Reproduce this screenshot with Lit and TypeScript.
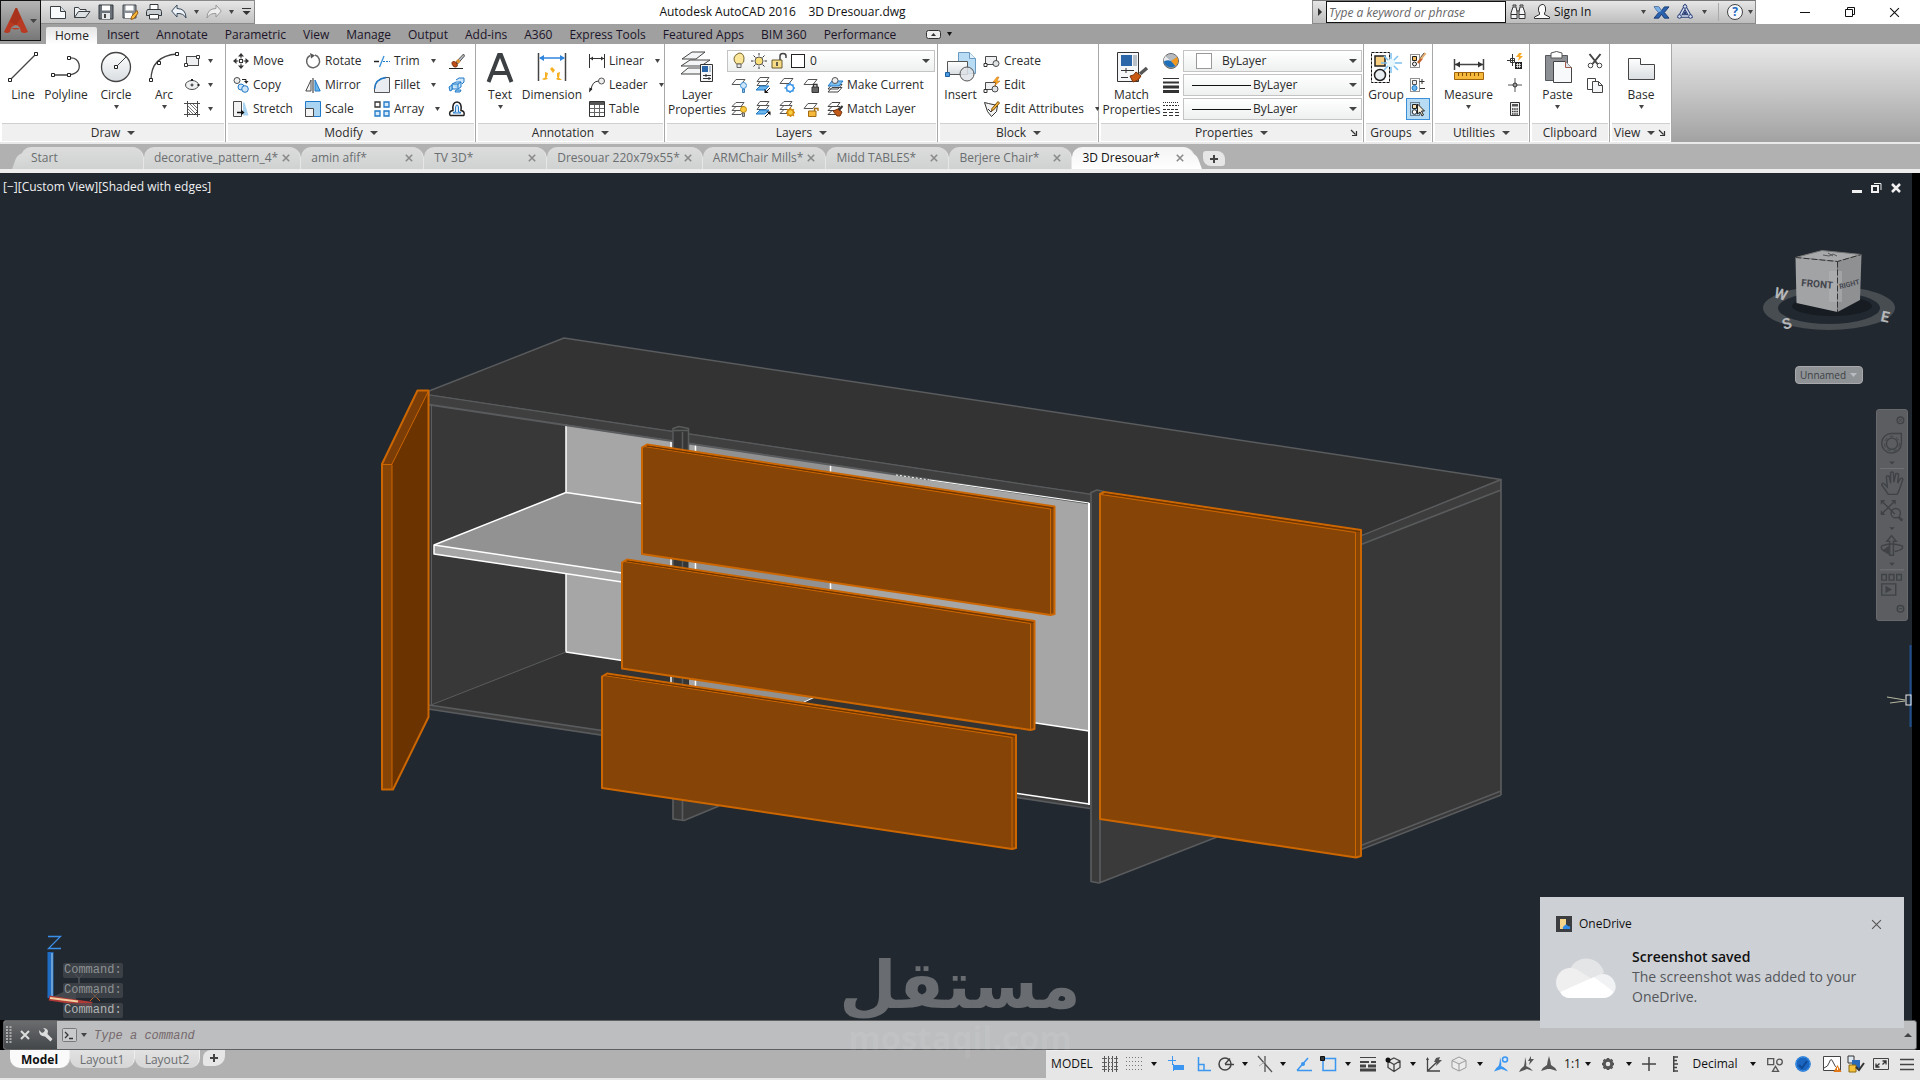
import { LitElement, html, svg, css, nothing, TemplateResult, SVGTemplateResult } from "lit";
import { customElement, property } from "lit/decorators.js";

type Drawing = SVGTemplateResult;

const INK = "#4a4a4a";
const BLUE = "#1f78c8";

/* Small icons, drawn on a 16 x 16 grid */
const small: Record<string, Drawing> = {
  rect: svg`<rect x="2.5" y="3.5" width="12" height="9" fill="#eef0f2" stroke="${INK}"/><path d="M.5 10.500h3v3h-3zM12.500 2.500h3v3h-3z" fill="#fff" stroke="#333"/>`,
  ellipse: svg`<ellipse cx="8" cy="8" rx="6.500" ry="4.500" fill="#eef0f2" stroke="${INK}"/><path d="M8 6.500v3M6.500 8h3" stroke="#222"/><path d="M7 2h2v2h-2zM13.500 7h2v2h-2z" fill="#222"/>`,
  hatch: svg`<path d="M3.500 0v16M13.500 0v16M0 2.500h16M0 13.500h16" stroke="${INK}"/><path d="M4 5l8 8M4 8l5 5M4 11l2 2M6 3l7 7M9 3l4 4" stroke="#777"/><path d="M10 14l4-4" stroke="#222"/>`,
  move: svg`<path d="M8 0l3 3.500H5zM8 16l3-3.500H5zM0 8l3.500-3v6zM16 8l-3.500-3v6z" fill="#333"/><path d="M8 3v2.500M8 10.500v2.500M3 8h2.500M10.500 8H13" stroke="#333"/><rect x="6.500" y="6.500" width="3" height="3" fill="#fff" stroke="#333"/>`,
  copy: svg`<circle cx="4" cy="3.500" r="3" fill="#eceef0" stroke="${INK}"/><path d="M9 2.500h4v2" fill="none" stroke="#222"/><path d="M11 4h4.500L13.300 6.800z" fill="#222"/><circle cx="8" cy="10" r="3" fill="#cfe6f8" stroke="${BLUE}"/><circle cx="12" cy="12" r="3.300" fill="#cfe6f8" stroke="${BLUE}"/>`,
  stretch: svg`<path d="M10 1.500h1.500l4 13H10z" fill="#a9d4f2"/><path d="M.5.500h8v15h-8z" fill="#f2f2f2" stroke="${INK}"/><path d="M4 11.500h5" stroke="#111" stroke-width="1.500"/><path d="M8 8.500l3.500 3L8 14.500z" fill="#111"/>`,
  rotate: svg`<path d="M10 2A6.500 6.500 0 1 1 5 2.500" fill="none" stroke="#666" stroke-width="1.500"/><path d="M5 0l5 2.500L6 5.500z" fill="#555"/>`,
  mirror: svg`<path d="M6 3v11H.8z" fill="#f4f4f4" stroke="${INK}"/><path d="M8 1v15" stroke="#222"/><path d="M10 3v11h5.200z" fill="#6bb6ea" stroke="${BLUE}"/>`,
  scale: svg`<path d="M.5.500h15v15h-15z" fill="#a9d4f2" stroke="${BLUE}"/><path d="M.5 7.500h8v8h-8z" fill="#f4f4f4" stroke="${INK}"/>`,
  trim: svg`<path d="M0 8.500h5" stroke="#222" stroke-width="1.500"/><path d="M10 3L5.500 14" stroke="#3a8fd8" stroke-width="1.300"/><path d="M9 8.500h7" stroke="${BLUE}" stroke-dasharray="2 1"/>`,
  fillet: svg`<path d="M.5 15.500V12Q1 2 12 .5h3.500v15z" fill="#e9edf1" stroke="#555"/><path d="M.5 12Q1 2 12 .5" fill="none" stroke="${BLUE}" stroke-width="1.500"/>`,
  array: svg`<path d="M1 1h5v5H1z" fill="#fff" stroke="#333" stroke-width="1.300"/><path d="M10 1h5v5h-5zM1 10h5v5H1zM10 10h5v5h-5z" fill="#d9ebfa" stroke="${BLUE}" stroke-width="1.300"/>`,
  erase: svg`<path d="M14.500 1L7 9l1.500 2L15.500 3z" fill="#b8bcc0" stroke="#555"/><path d="M8 7l2.500 2.500" stroke="#e0912c" stroke-width="3"/><path d="M3 10c0-2 3-2 4.500 0s1 4-1 4-3.500-2-3.500-4z" fill="#c05018" stroke="#7a2e08"/><path d="M0 15.500h14" stroke="#222"/>`,
  explode: svg`<path d="M3 7l4-2h5v5l-3 2H3zM7 3l3-2h5v4l-2 2" fill="#cfe6f8" stroke="${BLUE}"/><path d="M0 10l3-2v5l-2 1zM7 13h5l-1 2H6zM3 7h6v5M9 7l3-2" fill="#a9d4f2" stroke="${BLUE}"/>`,
  offset: svg`<path d="M1 14.500h14M1 14.500Q-.5 10 4 9.500 3 1 8 1t4 8.500Q16 10 15 14.500" fill="none" stroke="#222" stroke-width="1.500"/><path d="M4 12h8Q12 11 9.500 11 10 4 8 4T6.500 11Q4 11 4 12z" fill="#d5eafb" stroke="${BLUE}"/>`,
  linear: svg`<path d="M.5 1v14M15.500 1v14M1 5.500h14" stroke="#333"/><path d="M1 5.500l3-2v4zM15 5.500l-3-2v4z" fill="#333"/>`,
  leader: svg`<path d="M2 13Q3 4 10 4" fill="none" stroke="#333"/><path d="M0 15.500l.5-5 3 1.500z" fill="#222"/><circle cx="12.500" cy="4" r="3" fill="#eee" stroke="#555"/>`,
  table: svg`<path d="M.5.500h15v15H.5z" fill="#fff" stroke="#333"/><path d="M1 1h14v3H1z" fill="#555"/><path d="M1 7.500h14M1 11.500h14M5.500 4v11M10.500 4v11" stroke="#666"/>`,
  bulb: svg`<path d="M5.500 11Q2.500 8 3 5t5-5q4.500 0 5 5t-2.500 6z" fill="#fbe69a" stroke="#7a6a30"/><path d="M6 11h4v3.500H6z" fill="#e8e8e8" stroke="#666"/>`,
  sun: svg`<circle cx="8" cy="8" r="4" fill="#fbe07a" stroke="#555"/><path d="M8 0v2.500M8 13.500V16M0 8h2.500M13.500 8H16M2.500 2.500l2 2M11.500 11.500l2 2M13.500 2.500l-2 2M4.500 11.500l-2 2" stroke="#333"/>`,
  lock: svg`<path d="M1 7h10v8H1z" fill="#f6dc86" stroke="#6a5a28"/><path d="M6 9v4" stroke="#333" stroke-width="1.500"/><path d="M9 7V3q0-2.500 3-2.500T15 3v2" fill="none" stroke="#444" stroke-width="1.500"/>`,
  layOff: svg`<path d="M5 2.500h9l-4 5H1z" fill="#fff" stroke="#555"/><circle cx="12.500" cy="8.500" r="3" fill="#cfe6f8" stroke="#3a8fd8"/><path d="M11.500 12h2v3.500h-2z" fill="#8cbce4" stroke="#3a7fb8"/>`,
  layIso: svg`<path d="M5 .5h9l-3 4H2zM5 4.500h9l-3 4H2z" fill="#fff" stroke="#555"/><path d="M5 9h9l-4 4H1z" fill="#6bb6ea" stroke="${BLUE}"/><path d="M15 11l-4 4" stroke="#111"/><path d="M9.500 16v-4l4 4z" fill="#111"/>`,
  layFrz: svg`<path d="M5 1.500h9l-4 5H1z" fill="#fff" stroke="#555"/><circle cx="11" cy="11" r="3.500" fill="#fff" stroke="#3a96e8" stroke-width="1.500"/><path d="M11 5.500v2M11 14.500V16M5.500 11h2M14.500 11H16M7.500 7.500l1.500 1.500M14.500 7.500L13 9M7.500 14.500L9 13M14.500 14.500L13 13" stroke="#3a96e8" stroke-width="1.500"/>`,
  layLck: svg`<path d="M5 2.500h9l-4 5H1z" fill="#fff" stroke="#555"/><path d="M9 10h6.500v5.500H9z" fill="#666" stroke="#333"/><path d="M10.500 10V7.500h3.500V10" fill="none" stroke="#333" stroke-width="1.300"/>`,
  layCur: svg`<path d="M5 10.500h10l-4 4.500H1zM5 7.500h10l-4 4.500H1z" fill="#fff" stroke="#444"/><path d="M5 4h11l-4 5H1z" fill="#7cc0f0" stroke="${BLUE}"/><circle cx="8" cy="3.500" r="3" fill="#eee" stroke="#555"/>`,
  layOn: svg`<path d="M5 9.500h8l-3 4H1zM5 5.500h8l-3 4H1zM5 1.500h8l-3 4H1z" fill="#fff" stroke="#555"/><circle cx="12.500" cy="8.500" r="3" fill="#fbc93c" stroke="#c08a10"/><path d="M11.500 12h2v3.500h-2z" fill="#bbb" stroke="#666"/>`,
  layUniso: svg`<path d="M5 .5h9l-3 4H2zM5 4.500h9l-3 4H2z" fill="#fff" stroke="#555"/><path d="M5 9h9l-4 4H1z" fill="#6bb6ea" stroke="${BLUE}"/><path d="M10 16l4-4" stroke="#111"/><path d="M15.500 10.500v4l-4-4z" fill="#111"/>`,
  layThaw: svg`<path d="M5 8.500h8l-3 4H1zM5 4.500h8l-3 4H1zM5 .5h8l-3 4H1z" fill="#fff" stroke="#555"/><circle cx="11.500" cy="11.500" r="3" fill="#fbd040" stroke="#d08a10" stroke-width="1.500"/><path d="M11.500 6.500v1.500M11.500 15v1M7 11.500h1M15 11.500h1M8.200 8.200l1 1M14 14l1 1M14.800 8.200l-1 1M8.200 14.800l1-1" stroke="#d08a10" stroke-width="1.500"/>`,
  layUnl: svg`<path d="M5 2.500h9l-4 5H1z" fill="#fff" stroke="#555"/><path d="M5.500 10H13v5.500H5.500z" fill="#f6b93c" stroke="#a06a10"/><path d="M11.500 10V7.500H15V10" fill="none" stroke="#a06a10" stroke-width="1.300"/>`,
  layMat: svg`<path d="M5 9.500h8l-3 4H1zM5 5.500h8l-3 4H1zM5 1.500h8l-3 4H1z" fill="#fff" stroke="#444"/><path d="M6 10l4 5h3l2-4-4-3z" fill="#c05a18" stroke="#7a3208"/><path d="M12 9l3.500-4" stroke="#333" stroke-width="2"/>`,
  create: svg`<path d="M1.500 3.500h11v8h-11z" fill="#eef0f2" stroke="${INK}"/><circle cx="12" cy="10.500" r="3" fill="#dfe3e6" stroke="${INK}"/><path d="M0 10.500h3v3H0z" fill="#fff" stroke="#333"/>`,
  edit: svg`<path d="M1.500 5.500h10v7h-10z" fill="#eef0f2" stroke="${INK}"/><circle cx="11" cy="12" r="3" fill="#dfe3e6" stroke="${INK}"/><path d="M0 12.500h3v3H0z" fill="#fff" stroke="#333"/><path d="M13 0L9 5h3l-1.500 4L16 4h-3l2-4z" fill="#f9a825" stroke="#c06a10" stroke-width=".5"/>`,
  attr: svg`<path d="M.5 1.500l4 1 9 2-1 6-5 5-4-5z" fill="#f2f2f2" stroke="#333"/><path d="M4 8l3 3 3-4" fill="none" stroke="#333"/><path d="M14 .5l-6 7-.5 2 2-.5 6-7z" fill="#f6b93c" stroke="#7a4a08"/>`,
  wheel: svg`<circle cx="8" cy="8" r="7.500" fill="#9aa0a6" stroke="#666"/><path d="M8 8L3 3a7.500 7.500 0 0 1 11 1z" fill="#b4bac0"/><path d="M8 8L2.500 3A7.500 7.500 0 0 0 .8 9.500z" fill="#e8eaec"/><path d="M8 8l6-4a7.500 7.500 0 0 1-1.500 9z" fill="#f39a1e"/><path d="M.8 8.500q4-2 7-.5l4.500 5A7.500 7.500 0 0 1 .8 8.500z" fill="#1e6fb8"/>`,
  weight: svg`<path d="M0 1.500h16" stroke="#333"/><path d="M0 5.500h16" stroke="#333" stroke-width="2"/><path d="M0 10h16M0 14.500h16" stroke="#333" stroke-width="3"/>`,
  ltype: svg`<path d="M0 1.500h16" stroke="#333" stroke-dasharray="1 1"/><path d="M0 4.500h16" stroke="#333" stroke-dasharray="2 1"/><path d="M0 8.500h16" stroke="#333" stroke-dasharray="3 1"/><path d="M0 11.500h16M0 14.500h16" stroke="#333" stroke-dasharray="4 2"/>`,
  ungroup: svg`<path d="M.5 1.500h9v13h-9z" fill="none" stroke="#222" stroke-dasharray="1 1"/><path d="M2.500 3.500h4v4h-4z" fill="#f6c060" stroke="#222"/><circle cx="4.500" cy="11" r="2" fill="#eee" stroke="#222"/><path d="M12 5L8 10" stroke="#c0602a" stroke-width="2.500"/><path d="M15.500 0L11 5.500" stroke="#e8b070" stroke-width="2.500"/><path d="M14 0l-3.500 4.500" stroke="#555"/>`,
  gedit: svg`<path d="M.5 1.500h9v13h-9z" fill="none" stroke="#222" stroke-dasharray="1 1"/><path d="M2.500 3.500h4v4h-4z" fill="#eee" stroke="#555"/><circle cx="4.500" cy="11" r="2.500" fill="#6bb6ea" stroke="${BLUE}"/><path d="M9.500 4.500h5M12 2v5M10 11.500h5" stroke="#333"/>`,
  gsel: svg`<path d="M.5 1.500h9v13h-9z" fill="none" stroke="#222" stroke-dasharray="1 1"/><path d="M2.500 3.500h4v4h-4z" fill="#f6e0b0" stroke="#222"/><circle cx="4.500" cy="11" r="2.300" fill="#fff" stroke="#222"/><path d="M7.500 3v10l2.500-2 2 4 1.500-1-2-4h3z" fill="#f8f0d8" stroke="#222"/>`,
  qcalc: svg`<path d="M5.500 1v12M0 7.500h8M3.500 5.500h4v4h-4z" fill="none" stroke="#333"/><path d="M8 9h7v7H8z" fill="#222"/><path d="M9 11.500h5M9 13.500h5M10.500 10v5M12.500 10v5" stroke="#fff" stroke-width=".700"/><path d="M12 0L9 4h3l-1 4 5-5h-3l2-3z" fill="#f9a825"/>`,
  point: svg`<path d="M8 1v14M1 8h14" stroke="#555"/><circle cx="8" cy="8" r="2" fill="#999" stroke="#333"/>`,
  calc: svg`<path d="M3.500 1.500h9v13h-9z" fill="#f2f2f2" stroke="#333"/><path d="M5 3h6v2.500H5z" fill="#555"/><path d="M5 8h6M5 10.500h6M5 13h6" stroke="#333" stroke-width="1.300" stroke-dasharray="1.500 .700"/>`,
  cut: svg`<path d="M2.500 1l8 10M13.500 1l-8 10" stroke="#444" stroke-width="2"/><circle cx="3.500" cy="12.500" r="2.300" fill="#fff" stroke="#444"/><circle cx="12.500" cy="12.500" r="2.300" fill="#fff" stroke="#444"/>`,
  clone: svg`<path d="M.5 1.500h8v11h-8z" fill="#fff" stroke="#444"/><path d="M5.500 4.500h6l4 4v7h-10z" fill="#f4f6f8" stroke="#444"/><path d="M11.500 4.500v4h4" fill="none" stroke="#444"/>`,

  new: svg`<path d="M.5 2.500h10l5 5v7h-15z" fill="#f8fafb" stroke="#3a3f44"/><path d="M10.500 2.500v5h5" fill="#dde3e8" stroke="#3a3f44"/>`,
  open: svg`<path d="M.5 13.500v-10h4l1.500 2h6v2" fill="#f0f2f4" stroke="#3a3f44"/><path d="M.5 13.500l4-6H16l-4.500 6z" fill="#dde0e3" stroke="#3a3f44"/>`,
  save: svg`<path d="M1 1h14v14H1z" fill="#6a7178" stroke="#33383d"/><path d="M4 1.500h8v5H4z" fill="#fff"/><path d="M4 9h8v6H4z" fill="#e3e7ea"/><path d="M6 10h2v4H6z" fill="#444"/>`,
  saveas: svg`<path d="M1 1h13v13H1z" fill="#8a9096" stroke="#44494e"/><path d="M3.500 1.500h8v5h-8zM3 9h7v5H3z" fill="#fff"/><path d="M15 6.500l-5.500 6-.5 3 3-1L16 9z" fill="#f6b93c" stroke="#9a5a10"/>`,
  print: svg`<path d="M4 .5h8v5H4z" fill="#fff" stroke="#33383d"/><path d="M1.500 5.500h13l1 2v4H.5v-4z" fill="#c8cdd2" stroke="#33383d"/><path d="M3.500 10.500h9v4.500h-9z" fill="#fff" stroke="#33383d"/>`,
  undo: svg`<path d="M6 1v3.500q9 0 9 9.500-2.500-5-9-4.500V13L.7 7z" fill="#eef3f7" stroke="#3a4a5a"/>`,
  redo: svg`<path d="M10 1v3.500q-9 0-9 9.500 2.500-5 9-4.500V13l5.300-6z" fill="#eee" stroke="#999"/>`,
  binoc: svg`<path d="M1 14.500V9l2-6h3l1 5v6.500zM15 14.500V9l-2-6h-3L9 8v6.500z" fill="#f2f4f6" stroke="#333"/><path d="M3 2.500V1h3v1.500M10 2.500V1h3v1.500M7 7h2M1 10.500h6M9 10.500h6" fill="none" stroke="#333"/>`,
  user: svg`<path d="M5.500 9Q4 7 4.500 4T8 .5t3.500 3.500-1 5v1.500l5 2.500v1.500H.5V13l5-2.500z" fill="#fbfbfb" stroke="#333"/>`,
  exch: svg`<path d="M0 2h5l3 4 3-4h5l-5 6 5 6h-5l-3-4-3 4H0l5-6z" fill="#2a62b0" stroke="#173a70"/><path d="M0 2h5l3 4-3 2z" fill="#7ab0e8"/>`,
  a360: svg`<path d="M8 3L13 12H3z" fill="none" stroke="#2a3f78" stroke-width="3.500"/><path d="M8 3L13 12H3z" fill="none" stroke="#d8e0f0" stroke-width="1.500"/><path d="M8 6.500l2 4H6z" fill="#2a3f78"/><circle cx="8" cy="2.500" r="1.800" fill="#d8e0f0" stroke="#2a3f78"/><circle cx="2.500" cy="12.500" r="1.800" fill="#d8e0f0" stroke="#2a3f78"/><circle cx="13.500" cy="12.500" r="1.800" fill="#d8e0f0" stroke="#2a3f78"/>`,

  grid: svg`<path d="M2.500 0v16M6.500 0v16M10.500 0v16M14.500 0v16" stroke="#555"/><path d="M0 2.500h16M0 6.500h16M0 10.500h16M0 13.500h16" stroke="#666" stroke-dasharray="2 1"/>`,
  snap: svg`<path d="M0 1.500h16M0 5.500h16M0 9.500h16M0 13.500h16" stroke="#777" stroke-dasharray="1 2"/>`,
  dyn: svg`<path d="M0 4.500h8M4.500 0v9" stroke="#3a96f0"/><path d="M6 9h10v5H6z" fill="#3a96f0"/><path d="M5.500 8v7" stroke="#3a96f0"/>`,
  ortho: svg`<path d="M3.500 1v13.500H16M3.500 8.500H9v6" fill="none" stroke="#3a96f0" stroke-width="1.500"/>`,
  polar: svg`<circle cx="7" cy="8" r="6" fill="none" stroke="#444" stroke-width="1.500"/><path d="M7 8.500h9M7 8l5-5.500" stroke="#444" stroke-width="1.300"/>`,
  iso: svg`<path d="M1 0l14 16M8 0v16" stroke="#555" stroke-width="1.300"/><path d="M2 10l7-5" stroke="#aaa"/>`,
  otrack: svg`<path d="M1 14.500h15M1 14.500L12 2" stroke="#3a96f0" stroke-width="1.500"/><circle cx="7" cy="8" r="2" fill="#3a96f0"/>`,
  osnap: svg`<path d="M3 2.500h12.500v12H3z" fill="none" stroke="#3a96f0" stroke-width="1.500"/><path d="M.5.500h4v4h-4z" fill="#333" stroke="#111"/>`,
  lweight: svg`<path d="M0 1.500h16" stroke="#444"/><path d="M0 6h9M11 6h5" stroke="#444" stroke-width="2"/><path d="M0 10h6M8 10h8M0 14h16" stroke="#444" stroke-width="3"/>`,
  osnap3: svg`<path d="M9 2l6 3v6.500l-6 4-6-4V5zM3 5l6 3.500L15 5M9 8.500v7" fill="none" stroke="#444" stroke-width="1.300"/><circle cx="3" cy="4" r="2.500" fill="#111"/>`,
  ducs: svg`<path d="M1.500 3v12H14M1.500 15L11 6" fill="none" stroke="#444" stroke-width="1.300"/><path d="M10 2L8 6h3l-1 4 6-6h-3l1-3z" fill="#555"/><path d="M0 4l1.500-3L3 4z" fill="#444"/>`,
  gizmo: svg`<path d="M8 1l7 3.500v7L8 15l-7-3.500v-7zM1 4.500L8 8l7-3.500M8 8v7" fill="#ececec" stroke="#999"/>`,
  annA: svg`<path d="M7 1q2 7 1 9 5 2 7 5.500L8.500 13 1 15.500q2-4 4.500-5.500 1.500-3 1.500-9z" fill="#3a96f0"/><circle cx="12" cy="3.500" r="2.500" fill="#d4e8fa" stroke="#3a96f0" stroke-width="1.500"/>`,
  annB: svg`<path d="M7 1q2 7 1 9 5 2 7 5l-6-2-8 3q2-4 5-6 1-3 1-9z" fill="#555"/><path d="M13 0l-3 5h2l-1 4 5-6h-3z" fill="#555"/>`,
  annC: svg`<path d="M8 0q1.500 5 2 9 4 2 6 6l-6.500-2h-3L0 15q2-4 6-6 .500-4 2-9z" fill="#555"/>`,
  gear: svg`<circle cx="8" cy="8" r="3.800" fill="none" stroke="#555" stroke-width="3"/><path d="M8 2v2M8 12v2M2 8h2M12 8h2M3.700 3.700l2 2M10.300 10.300l2 2M12.300 3.700l-2 2M5.700 10.300l-2 2" stroke="#555" stroke-width="2.500"/>`,
  plus: svg`<path d="M8 1v14M1 8h14" stroke="#444" stroke-width="1.500"/>`,
  ruler: svg`<path d="M6 0h1.500v16H6z" fill="#444"/><path d="M7 1h4M7 4.500h3M7 8h4M7 11.500h3M7 15h4" stroke="#444" stroke-width="1.500"/>`,
  shapes: svg`<path d="M.7 2.700h6v6h-6z" fill="none" stroke="#555" stroke-width="1.300"/><circle cx="12.500" cy="6" r="2.800" fill="none" stroke="#555" stroke-width="1.300"/><path d="M5.500 15.300l3-5 3 5z" fill="none" stroke="#555" stroke-width="1.300"/>`,
  hw: svg`<circle cx="8" cy="8" r="7.700" fill="#1a66c0"/><circle cx="8" cy="8" r="7" fill="none" stroke="#3a96f0"/><path d="M4 9l3 3 5-7" fill="none" stroke="#0e4a98" stroke-width="2"/>`,
  perf: svg`<path d="M-.5.500h17v14h-17z" fill="#fff" stroke="#444"/><path d="M0 12Q4 11 5.500 6T9 6t5 7" fill="none" stroke="#444"/><path d="M9.500 16l4-7 4 7z" fill="#e07818"/><path d="M13.500 11.500v2.500" stroke="#fff"/>`,
  trust: svg`<path d="M0 0h6v7H0z" fill="#dfe9f3" stroke="#333"/><path d="M4 4h8v8H4z" fill="#2a6ab8"/><path d="M1 9h7v7H1z" fill="#f6c23c" stroke="#8a6a10"/><path d="M8 11l3 3 5-7" fill="none" stroke="#333" stroke-width="2"/>`,
  full: svg`<path d="M.5 2.500h15v11H.5z" fill="none" stroke="#444"/><path d="M9.500 5H13v3.500M13 5L9.500 8.500M6.500 11H3V7.500M3 11l3.500-3.500" fill="none" stroke="#333" stroke-width="1.300"/>`,
  menu: svg`<path d="M1 3.500h14M1 8.500h14M1 13.500h14" stroke="#444" stroke-width="1.500"/>`,
};

/* Large ribbon icons, drawn on a 32 x 32 grid */
const large: Record<string, Drawing> = {
  line: svg`<path d="M3 29L29 3" stroke="#444" stroke-width="1.300"/><path d="M1.500 27.500h3v3h-3zM27.500 1.500h3v3h-3z" fill="#fff" stroke="#222"/>`,
  polyline: svg`<path d="M3 24H19Q31 22 29 13 27 6 19 7" fill="none" stroke="#444" stroke-width="1.300"/><path d="M1.500 22.500h3v3h-3zM17.500 22.500h3v3h-3zM17.500 5.500h3v3h-3z" fill="#fff" stroke="#222"/>`,
  circle: svg`<circle cx="16" cy="16" r="14.500" fill="url(#shade)" stroke="#444" stroke-width="1.300"/><path d="M16 16L26 6" stroke="#444"/><path d="M14.500 14.500h3v3h-3z" fill="#fff" stroke="#222"/>`,
  arc: svg`<path d="M3 29Q3 5 29 3" fill="none" stroke="#444" stroke-width="1.300"/><path d="M1.500 27.500h3v3h-3zM9.500 10.500h3v3h-3zM27.500 1.500h3v3h-3z" fill="#fff" stroke="#222"/>`,
  text: svg`<path d="M4.500 31L15 4h2l10.500 27M9 22h14" fill="none" stroke="#3d4043" stroke-width="4"/>`,
  dim: svg`<path d="M2.500 2v28M29.500 2v28" stroke="#444" stroke-width="1.500"/><path d="M4 7h24" stroke="#2f86dc" stroke-width="1.500"/><path d="M3 7l5-3v6zM29 7l-5-3v6z" fill="#2f86dc"/><path d="M14 18l2-2 3 3-2 3zM9 21l3 1-1 4-2 2zM21 22l3-1-1 6-2-1zM6 28l4-2 2 2-4 1zM20 28l2-2 4 3-4 0z" fill="#f6b021"/>`,
  layers: svg`<path d="M7 17h20l-7 6H0zM9 9h20l-9 6H0zM11 1h13l-9 7H1z" fill="#f4f5f6" stroke="#444"/><path d="M19.500 13.500h12v17h-12z" fill="#f5f6f8" stroke="#333"/><path d="M21 15h6v6h-6z" fill="#2a66a8"/><path d="M28 15h2v6h-2z" fill="#b8c4d0"/><path d="M22 24.500h8M22 27.500h8M25 23v3M28 26v3" stroke="#333"/>`,
  insert: svg`<path d="M13.500 1.500h11l6 6v15h-17z" fill="#b8dcf4" stroke="#6a9ac0"/><path d="M24.500 1.500v6h6" fill="#e2f1fb" stroke="#6a9ac0"/><path d="M2.500 10.500h20v13h-20z" fill="url(#shade)" stroke="#555"/><circle cx="22" cy="23" r="7" fill="#dfe3e7" fill-opacity=".85" stroke="#555"/><path d="M.5 21.500h4v4h-4z" fill="#4a9ae0" stroke="#1f5f9f"/>`,
  match: svg`<path d="M1.500 1.500h21v29h-21z" fill="#f4f6f8" stroke="#333"/><path d="M5 4h11v11H5z" fill="#2a66a8"/><path d="M17 4h4v11h-4z" fill="#b8c0c8"/><path d="M5 19.500h13M10 17v5M5 26.500h7" stroke="#333"/><path d="M14 25q4 0 6-4l5 4q-2 5-8 6z" fill="#c85a14" stroke="#7a3208"/><path d="M24 23l7-6" stroke="#555" stroke-width="3.500"/>`,
  group: svg`<path d="M1.500 1.500h18v30h-18z" fill="none" stroke="#111" stroke-dasharray="3 1"/><path d="M5 5h10v10H5z" fill="#f8cf80" stroke="#222" stroke-width="1.500"/><circle cx="10" cy="24" r="5.500" fill="#e8edf2" stroke="#222" stroke-width="1.500"/><path d="M21 2v20M11 12h21M14 5l14 14M28 5L14 19" stroke="#7ec0f0" stroke-width="1.500"/><circle cx="21" cy="12" r="4" fill="#e8f6ff"/>`,
  measure: svg`<path d="M1.500 8v11M30.500 8v11M2 13.500h28" stroke="#444" stroke-width="1.500"/><path d="M2 13.500l5-3v6zM30 13.500l-5-3v6z" fill="#333"/><path d="M1.500 21.500h29v7h-29z" fill="#f6b93c" stroke="#a0640a"/><path d="M5.500 22v3M9.500 22v3M13.500 22v3M17.500 22v3M21.500 22v3M25.500 22v3" stroke="#7a4a08"/>`,
  paste: svg`<path d="M3.500 4.500h22v25h-22z" fill="#8c9094" stroke="#55595d"/><path d="M9 2q5.500-3 11 0v5H9z" fill="#fff" stroke="#555"/><path d="M11.500 10.500h12l6 6v15h-18z" fill="#f7f9fb" stroke="#444"/><path d="M23.500 10.500v6h6" fill="#dfe5ea" stroke="#a05a4a"/>`,
  base: svg`<path d="M3.500 7.500h12v6h14v15h-26z" fill="url(#shade)" stroke="#444"/>`,
};

const icon = (name: string, size = 16) => html`<svg
  class="icon" width=${size} height=${size} viewBox="0 0 16 16" aria-hidden="true">${small[name]}</svg>`;

const bigIcon = (name: string) => html`<svg class="icon" width="32" height="32" viewBox="0 0 32 32" aria-hidden="true">
  <defs><linearGradient id="shade" x1="0" y1="0" x2="0" y2="1">
    <stop offset="0" stop-color="#fff"/><stop offset="1" stop-color="#d9dde1"/>
  </linearGradient></defs>${large[name]}</svg>`;

const caret = (w = 7) => html`<svg class="caret" width=${w} height="4" viewBox="0 0 8 4"
  preserveAspectRatio="none" aria-hidden="true"><path d="M0 0h8L4 4z" fill="currentColor"/></svg>`;

const cross = (size: number, weight: number) => html`<svg class="icon" width=${size} height=${size} viewBox="0 0 10 10"
  aria-hidden="true"><path d="M1 1l8 8M9 1L1 9" stroke="currentColor" stroke-width=${weight}/></svg>`;

const shared = css`
  :host { font-family: "Open Sans", "Noto Sans", sans-serif; font-size: 12px; color: #2b2b2b; }
  * { box-sizing: border-box; }
  button, input, select {
    font: inherit; color: inherit; background: none; border: 0; padding: 0; margin: 0; line-height: 16px;
  }
  button { white-space: nowrap; cursor: default; }
  .icon { flex: none; display: block; overflow: visible; }
  .caret { flex: none; display: block; color: #444; }
`;

@customElement("title-bar")
class TitleBar extends LitElement {
  static styles = [shared, css`
    :host { display: flex; height: 24px; background: #fff; align-items: stretch; }
    .quick {
      display: grid; grid-template-columns: repeat(5, 24px) 25px 10px 25px 10px 21px; place-items: center;
      margin-left: 41px; padding-left: 5px; width: 214px;
      background: linear-gradient(#e6e6e6, #c2c2c2); border: 1px solid #8a8a8a; border-left: 0;
    }
    .quick button { display: grid; place-items: center; }
    .title { flex: 1; text-align: center; line-height: 24px; white-space: pre; color: #111; padding-right: 2px; }
    .info {
      display: grid; width: 444px; align-items: center; justify-items: center;
      grid-template-columns: 13px 180px 24px 24px 40px 56px 22px 26px 12px 16px 18px 12px;
      background: linear-gradient(#e6e6e6, #bdbdbd); border: 1px solid #8a8a8a; border-top-color: #777;
    }
    .search { width: 180px; height: 22px; background: #fff; border: 1px solid #111; padding: 0 2px; font-style: italic; }
    .search::placeholder { color: #666; opacity: 1; }
    .signin { justify-self: start; color: #111; }
    .end { justify-self: end; padding: 0 4px; }
    .rule { width: 1px; height: 18px; background: #aaa; }
    .help { font-weight: 700; color: #1f68c0; border: 1px solid #444; border-radius: 8px; width: 16px; height: 16px; line-height: 14px; background: #f6f8fa; }
    .window { display: grid; grid-template-columns: repeat(3, 45px); margin-left: 26px; width: 138px; place-items: center; color: #111; }
  `];
  render() {
    return html`
      <div class="quick">
        ${["new", "open", "save", "saveas", "print", "undo"].map((n) => html`<button aria-label=${n}>${icon(n)}</button>`)}
        <button aria-label="Undo list">${caret(5)}</button>
        <button aria-label="redo">${icon("redo")}</button>
        <button aria-label="Redo list">${caret(5)}</button>
        <button aria-label="Customize"><svg class="icon" width="9" height="8" viewBox="0 0 9 8"><path d="M0 .5h9" stroke="#333"/><path d="M.5 3h8L4.500 7z" fill="#333"/></svg></button>
      </div>
      <div class="title">Autodesk AutoCAD 2016    3D Dresouar.dwg</div>
      <div class="info">
        <button aria-label="Collapse search"><svg class="icon" width="4" height="8" viewBox="0 0 4 8"><path d="M0 0l4 4-4 4z" fill="#333"/></svg></button>
        <input class="search" aria-label="Search" placeholder="Type a keyword or phrase">
        <button aria-label="Find">${icon("binoc")}</button>
        <button aria-label="Account">${icon("user")}</button>
        <button class="signin">Sign In</button>
        <button class="end" aria-label="Account list">${caret(5)}</button>
        <button aria-label="Exchange">${icon("exch", 15)}</button>
        <button aria-label="A360">${icon("a360")}</button>
        <button aria-label="A360 list">${caret(5)}</button>
        <span class="rule"></span>
        <button class="help" aria-label="Help">?</button>
        <button aria-label="Help list">${caret(5)}</button>
      </div>
      <div class="window">
        <button aria-label="Minimize"><svg class="icon" width="10" height="10" viewBox="0 0 10 10"><path d="M0 5.500h10" stroke="#111"/></svg></button>
        <button aria-label="Restore"><svg class="icon" width="10" height="10" viewBox="0 0 10 10"><path d="M.5 2.500h7v7h-7zM2.500 2.500v-2h7v7h-2" fill="none" stroke="#111"/></svg></button>
        <button aria-label="Close">${cross(11, 1)}</button>
      </div>`;
  }
}

interface Tool { icon: string; label?: string; caret?: boolean; on?: boolean; }
const t = (i: string, label?: string, c = false, on = false): Tool => ({ icon: i, label, caret: c, on });

@customElement("ribbon-bar")
class RibbonBar extends LitElement {
  static styles = [shared, css`
    :host { display: block; }
    .tabs { display: flex; height: 20px; padding-left: 46px; background: #a0a0a0; align-items: flex-end; }
    .tab { height: 20px; padding: 1px 8px 0 9px; line-height: 17px; color: #1b1428; }
    .tab.on { height: 17px; padding: 0 8px 0 9px; background: linear-gradient(#e4e4e4, #fff); border-radius: 2px 2px 0 0; color: #222; margin-right: 1px; }
    .fold { display: flex; align-items: center; gap: 6px; height: 20px; padding-left: 22px; }
    .fold .caret { color: #111; }
    .panels { display: flex; height: 100px; background: linear-gradient(#e8e8e8, #a2a2a2); border-bottom: 2px solid #e9e9e9; }
    .panel { display: flex; flex-direction: column; background: #fff; border-right: 1px solid #a8a8a8; padding: 0 1px 1px 2px; }
    .body { display: grid; flex: 1; align-items: start; }
    .foot {
      display: flex; align-items: center; justify-content: center; gap: 7px; height: 18px; position: relative;
      background: #f0f0f0; border-top: 1px solid #cfcfcf; line-height: 16px;
    }
    .launch { position: absolute; right: 5px; top: 6px; }
    .big { display: flex; flex-direction: column; align-items: center; padding-top: 7px; line-height: 15px; }
    .big .label { margin-top: 4px; text-align: center; line-height: 15px; white-space: pre; }
    .big .caret { margin-top: 3px; }
    .stack { display: grid; grid-auto-rows: 24px; padding-top: 5px; }
    .tool { display: flex; align-items: center; gap: 4px; height: 24px; }
    .tool .caret { margin-left: 7px; }
    .tool.bare .caret { margin-left: 4px; }
    .tool.on { width: 24px; height: 22px; margin: 1px 0 0 -4px; justify-content: center; background: #b9dcf5; border: 1px solid #3a8fd8; }
    .draw { width: 226px; } .draw .body { grid-template-columns: 42px 44px 56px 40px 1fr; }
    .modify { width: 250px; } .modify .body { grid-template-columns: 72px 69px 75px 1fr; padding-left: 5px; }
    .annotation { width: 189px; } .annotation .body { grid-template-columns: 44px 60px 1fr; }
    .annotation .stack { padding-left: 7px; }
    .layers { width: 273px; } .layers .body { grid-template-columns: 60px 1fr; }
    .block { width: 161px; } .block .body { grid-template-columns: 41px 1fr; }
    .block .stack { padding-left: 3px; }
    .properties { width: 265px; } .properties .body { grid-template-columns: 61px 1fr; }
    .groups { width: 69px; } .groups .body { grid-template-columns: 40px 1fr; }
    .groups .stack { padding-left: 4px; }
    .utilities { width: 97px; } .utilities .body { grid-template-columns: 67px 1fr; }
    .utilities .stack { padding-left: 5px; }
    .clipboard { width: 80px; } .clipboard .body { grid-template-columns: 51px 1fr; }
    .clipboard .stack { padding-left: 4px; }
    .view { width: 62px; } .view .foot { justify-content: flex-start; padding-left: 2px; }
    .grid5 { display: grid; grid-template-columns: repeat(4, 24px) 1fr; grid-template-rows: 24px 24px 24px; padding-top: 5px; }
    .grid5 > .tool { padding-left: 4px; }
    .combo {
      display: flex; align-items: center; height: 22px; padding: 0 4px 0 12px; gap: 4px;
      background: linear-gradient(#fff, #eef0f0); border: 1px solid #c4c4c4;
    }
    .combo select { flex: 1; min-width: 0; appearance: none; outline: 0; }
    .combo.layer { grid-column: 1 / -1; margin: 1px 1px 0 0; padding-left: 3px; }
    .combo.layer select { padding-left: 1px; }
    .swatch { width: 14px; height: 14px; border: 1px solid #222; background: #fff; }
    .swatch.pale { width: 16px; height: 16px; border-color: #999; margin-right: 6px; }
    .stroke { width: 59px; height: 1px; background: #111; margin: 0 -2px 0 -4px; }
    .proprow { display: grid; grid-template-columns: 20px 1fr; height: 24px; padding-left: 1px; align-items: center; }
  `];

  private big(name: string, label: string, arrow = false) {
    return html`<button class="big">${bigIcon(name)}<span class="label">${label}</span>${arrow ? caret(5) : nothing}</button>`;
  }
  private tool(x: Tool) {
    return html`<button class="tool ${x.label ? "" : "bare"} ${x.on ? "on" : ""}" aria-label=${x.label ?? x.icon}>
      ${icon(x.icon)}${x.label ? html`<span>${x.label}</span>` : nothing}${x.caret ? caret(5) : nothing}</button>`;
  }
  private stack(...tools: Tool[]) { return html`<div class="stack">${tools.map((x) => this.tool(x))}</div>`; }
  private panel(name: string, body: TemplateResult, arrow = true, launch = false) {
    return html`<section class="panel ${name.toLowerCase()}">
      <div class="body">${body}</div>
      <div class="foot"><span>${name}</span>${arrow ? caret(8) : nothing}
        ${launch ? html`<svg class="icon launch" width="6" height="6" viewBox="0 0 6 6"><path d="M0 0l4.500 4.500M5.500 1v4.500H1" fill="none" stroke="#333" stroke-width="1.200"/></svg>` : nothing}
      </div></section>`;
  }
  private prop(name: string, label: string, sample: TemplateResult) {
    return html`<div class="proprow">${icon(name)}
      <div class="combo">${sample}<select aria-label=${label}><option>ByLayer</option></select>${caret(8)}</div></div>`;
  }

  render() {
    const tabs = ["Insert", "Annotate", "Parametric", "View", "Manage", "Output", "Add-ins", "A360",
      "Express Tools", "Featured Apps", "BIM 360", "Performance"];
    return html`
      <nav class="tabs">
        <button class="tab on">Home</button>
        ${tabs.map((x) => html`<button class="tab">${x}</button>`)}
        <button class="fold" aria-label="Minimize ribbon">
          <svg class="icon" width="15" height="9" viewBox="0 0 15 9"><rect x=".5" y=".5" width="14" height="8" rx="2" fill="#eee" stroke="#333"/><path d="M5 6l2.500-3L10 6z" fill="#333"/></svg>${caret(5)}
        </button>
      </nav>
      <div class="panels">
        ${this.panel("Draw", html`${this.big("line", "Line")}${this.big("polyline", "Polyline")}
          ${this.big("circle", "Circle", true)}${this.big("arc", "Arc", true)}
          ${this.stack(t("rect", undefined, true), t("ellipse", undefined, true), t("hatch", undefined, true))}`)}
        ${this.panel("Modify", html`
          ${this.stack(t("move", "Move"), t("copy", "Copy"), t("stretch", "Stretch"))}
          ${this.stack(t("rotate", "Rotate"), t("mirror", "Mirror"), t("scale", "Scale"))}
          ${this.stack(t("trim", "Trim", true), t("fillet", "Fillet", true), t("array", "Array", true))}
          ${this.stack(t("erase"), t("explode"), t("offset"))}`)}
        ${this.panel("Annotation", html`${this.big("text", "Text", true)}${this.big("dim", "Dimension")}
          ${this.stack(t("linear", "Linear", true), t("leader", "Leader", true), t("table", "Table"))}`)}
        ${this.panel("Layers", html`${this.big("layers", "Layer\nProperties")}
          <div class="grid5">
            <div class="combo layer">${icon("bulb")}${icon("sun")}${icon("lock")}<span class="swatch"></span>
              <select aria-label="Layer"><option>0</option></select>${caret(8)}</div>
            ${[t("layOff"), t("layIso"), t("layFrz"), t("layLck"), t("layCur", "Make Current"),
              t("layOn"), t("layUniso"), t("layThaw"), t("layUnl"), t("layMat", "Match Layer")].map((x) => this.tool(x))}
          </div>`)}
        ${this.panel("Block", html`${this.big("insert", "Insert")}
          ${this.stack(t("create", "Create"), t("edit", "Edit"), t("attr", "Edit Attributes", true))}`)}
        ${this.panel("Properties", html`${this.big("match", "Match\nProperties")}
          <div class="stack">
            ${this.prop("wheel", "Object color", html`<span class="swatch pale"></span>`)}
            ${this.prop("weight", "Lineweight", html`<span class="stroke"></span>`)}
            ${this.prop("ltype", "Linetype", html`<span class="stroke"></span>`)}
          </div>`, true, true)}
        ${this.panel("Groups", html`${this.big("group", "Group")}
          ${this.stack(t("ungroup"), t("gedit"), t("gsel", undefined, false, true))}`)}
        ${this.panel("Utilities", html`${this.big("measure", "Measure", true)}
          ${this.stack(t("qcalc"), t("point"), t("calc"))}`)}
        ${this.panel("Clipboard", html`${this.big("paste", "Paste", true)}${this.stack(t("cut"), t("clone"))}`, false)}
        ${this.panel("View", html`${this.big("base", "Base", true)}`, true, true)}
      </div>`;
  }
}

@customElement("file-tabs")
class FileTabs extends LitElement {
  static styles = [shared, css`
    :host { display: flex; height: 29px; padding: 3px 0 0 21px; background: #b1b1b1; border-bottom: 4px solid #ededed; align-items: stretch; }
    .tab {
      display: flex; align-items: center; justify-content: space-between; gap: 4px; min-width: 123px; padding: 0 10px;
      background: linear-gradient(#dcdcdc, #d0d2d2); border-radius: 10px 12px 0 0; border-right: 1px solid #e6e6e6;
      color: #6a6e70; position: relative;
    }
    .tab.on { background: linear-gradient(#f4f4f4, #fff); color: #111; }
    .tab.first::before, .tab.on::after {
      content: ""; position: absolute; bottom: 0; top: 6px; width: 14px; background: inherit;
    }
    .tab.first::before { left: -6px; transform: skewX(-20deg); border-radius: 6px 0 0 0; }
    .tab.on::after { right: -5px; transform: skewX(20deg); border-radius: 0 6px 0 0; }
    .x { color: #8a8a8a; position: relative; z-index: 1; }
    .name { position: relative; z-index: 1; line-height: 16px; white-space: nowrap; }
    .add { align-self: end; width: 22px; height: 15px; margin: 0 0 3px 8px; background: #e6e6e6; border-radius: 3px 8px 3px 8px; display: grid; place-items: center; }
  `];
  render() {
    const names = ["decorative_pattern_4*", "amin afif*", "TV 3D*", "Dresouar 220x79x55*", "ARMChair Mills*",
      "Midd TABLES*", "Berjere Chair*", "3D Dresouar*"];
    return html`
      <div class="tab first"><span class="name">Start</span></div>
      ${names.map((n, i) => html`<div class="tab ${i === names.length - 1 ? "on" : ""}">
        <span class="name">${n}</span><button class="x" aria-label="Close ${n}">${cross(8, 2)}</button></div>`)}
      <button class="add" aria-label="New drawing"><svg class="icon" width="8" height="8" viewBox="0 0 8 8"><path d="M4 0v8M0 4h8" stroke="#444" stroke-width="2"/></svg></button>`;
  }
}

@customElement("model-view")
class ModelView extends LitElement {
  static styles = [shared, css`
    :host { display: block; position: relative; background: #212830; border-right: 8px solid #000; overflow: hidden; }
    .scene { position: absolute; inset: 0; width: 100%; height: 100%; }
    .caption { position: relative; display: block; padding: 5px 3px; line-height: 18px; color: #f0f0f0; }
    .controls { position: absolute; top: 9px; right: 11px; display: flex; gap: 9px; align-items: center; }
    .named {
      position: absolute; top: 193px; right: 49px; width: 68px; height: 18px; border-radius: 4px; font-size: 10px;
      background: #8f9396; border: 1px solid #a9a9ad; color: #3c3f45; display: flex; align-items: center; justify-content: space-between; padding: 0 5px 0 4px;
    }
    .named .caret { color: #b9bdc2; }
    .nav {
      position: absolute; top: 236px; right: 4px; width: 32px; height: 212px; background: #5b5d60; border-radius: 3px;
      border: 1px solid #686a6c;
    }
    .history { position: absolute; left: 63px; bottom: 2px; display: grid; gap: 5px; margin: 0; }
    .history span {
      font: 12px/15px "Liberation Mono", monospace; background: rgba(70, 74, 78, .7); color: #8e9194; border-radius: 2px; width: 60px; padding-left: 1px;
    }
    .history span:last-child { color: #b2b4b6; }
  `];
  render() {
    const front = "#864407", edge = "#cc6600";
    const drawer = (x0: number, y0: number, x1: number, y1: number, h0: number, h1: number) => svg`
      <path d="M${x0} ${y0 + 1}L${x0 + 5} ${y0 - 2}L${x1} ${y1}V${h1 - 1}L${x1 - 4} ${h1}L${x0} ${h0}z" fill="${front}" stroke="${edge}" stroke-width="2" stroke-linejoin="round"/>
      <path d="M${x0 + 2} ${y0}L${x1 - 4} ${y1 + 2.5}V${h1}" fill="none" stroke="${edge}"/>
      <path d="M${x0 + 5} ${y0 - 0.5}L${x1 - 1} ${y1 + 1.5}" stroke="#6b3300"/>`;
    return html`
      <svg class="scene" viewBox="0 173 1912 847" role="img" aria-label="Dresser model">
        <g stroke-linejoin="round">
          <path d="M429 391L564 338L1501 479.500V795L1361 849V700L1090 808L428 709z" fill="#383838"/>
          <path d="M1361 849L1090 808.500V700H1361z" fill="#383838"/>
          <path d="M431 705L566 652L1089 731V804z" fill="#333"/>
          <path d="M566 424L1089 503V731L566 652z" fill="#a6a6a6"/>
          <path d="M566 424V652L1089 731" fill="none" stroke="#fff" stroke-width="1.500"/>
          <path d="M566 652L431 705" stroke="#5a5c5e"/>
          <path d="M566 492.500L676 508.500V582L434 545z" fill="#929292"/>
          <path d="M434 545L676 581V590L434 554z" fill="#a6a6a6"/>
          <path d="M434 545L566 492.500L676 508.500" fill="none" stroke="#fff" stroke-width="1.500"/>
          <path d="M676 581L434 545V554L676 590" fill="none" stroke="#fff" stroke-width="1.500"/>
          <path d="M696 444L830 465V692L804 702L696 735z" fill="#919191"/>
          <path d="M689 443h7v260h-7z" fill="#a6a6a6"/>
          <path d="M671 440v250M695.500 444v260M830.500 465v135" stroke="#fff" stroke-width="1.500"/>
          <path d="M804 702L814 697.500L1030 730L1020 736z" fill="#333"/>
          <path d="M804 702l10-4.500" stroke="#fff"/>
          <path d="M429 391L564 338L1501 479.500L1361 536L1090 494.300L429 395z" fill="#333" stroke="#595b5d" stroke-width="1.500"/>
          <path d="M429 395L1090 494.300V503L428 404z" fill="#3f3f3f"/>
          <path d="M429 395L1090 494.300" stroke="#5a5c5e"/>
          <path d="M428 404.500L1090 503.500" stroke="#595b5d" stroke-width="2"/>
          <path d="M896 475L930 480" stroke="#fff" stroke-dasharray="2 2"/>
          <path d="M930 480L1089 503" stroke="#fff"/>
          <path d="M1361 536L1501 480V490L1361 544z" fill="#3d3d3d"/>
          <path d="M1361 536L1501 480M431.500 404V705" stroke="#5a5c5e"/>
          <path d="M1361 544.500L1501 490M1501 479V795M1361 845.500L1501 791M1361 849.500L1501 795" stroke="#595b5d" stroke-width="1.700"/>
          <path d="M429 705L1089 804V808.500L428 709z" fill="#3f3f3f"/>
          <path d="M429 705L700 745M428 709L1090 808.500" stroke="#595b5d" stroke-width="1.700" fill="none"/>
          <path d="M1000 791L1089 804" stroke="#fff" stroke-width="1.500"/>
          <path d="M1089 503V805" stroke="#fff" stroke-width="2"/>
          <path d="M673 429L679 426.500L688.500 429V690H673z" fill="#363636"/>
          <path d="M673 690V428.500L679 426.500L688.500 428.500V460M682.500 432V690M674 430.500H688" fill="none" stroke="#595b5d" stroke-width="1.500"/>
          <path d="M673 790H725V804L684 820.500L673 819z" fill="#3a3a3a"/>
          <path d="M673 790V819L684 820.500L719 806M682.500 790V820" fill="none" stroke="#595b5d" stroke-width="1.700"/>
          <path d="M1091 492.500L1097 490L1104 492V815L1216 837L1100 883L1091 881.500z" fill="#3a3a3a"/>
          <path d="M1104 491.500L1097 490L1091 492.500V881.500L1099 883L1217 837M1100 815V883" fill="none" stroke="#595b5d" stroke-width="1.700"/>
          <path d="M382 464L417.500 390.500H428.500V717L393 789.500H382z" fill="#6b3300"/>
          <path d="M382 464H392V789.500H382z" fill="${front}"/>
          <path d="M382 464L417.500 390.500H428.500L392 464z" fill="#7a3d08"/>
          <path d="M382 464L417.500 390.500H428.500V717L393 789.500H382z" fill="none" stroke="${edge}" stroke-width="2"/>
          <path d="M382 464.500H392V789M392 464L428 392" fill="none" stroke="${edge}"/>
          ${drawer(642, 446.5, 1054.5, 506.5, 554, 615)}
          ${drawer(622, 561.5, 1034.5, 621, 668.5, 730)}
          ${drawer(602, 675.5, 1016, 735, 788, 849)}
          <path d="M1100 494L1104 492L1361 530V856L1356 857.500L1100 819z" fill="${front}" stroke="${edge}" stroke-width="2"/>
          <path d="M1101 494.500L1355.500 532.500V857" fill="none" stroke="${edge}"/>
          <path d="M1104 493.500L1360 531.500" stroke="#6b3300"/>
        </g>
        <g>
          <path fill-rule="evenodd" d="M1763 308a66 22 0 1 0 132 0a66 22 0 1 0-132 0zM1778 308a51 16 0 1 0 102 0a51 16 0 1 0-102 0z" fill="#484d51"/>
          <ellipse cx="1832" cy="306" rx="40" ry="10" fill="#171c22"/>
          <path d="M1795.500 257.500L1822 250.500L1861.500 254.500L1837.500 261.500z" fill="#a8a9aa" stroke="#777"/>
          <path d="M1795.500 257.500L1837.500 261.500V312L1796.500 303z" fill="#a2a3a4"/>
          <path d="M1837.500 261.500L1861.500 254.500L1860 300L1837.500 312z" fill="#8f9092"/>
          <path d="M1829 271h13v31h-13z" fill="#b4b6b8" fill-opacity=".5"/>
          <path d="M1795.500 257.500L1837.500 261.500L1861.500 254.500M1837.500 261.500V312" fill="none" stroke="#333" stroke-dasharray="6 2"/>
          <path d="M1823 255l6 1 4-2 4 2M1828 253l5 3" stroke="#55575a" fill="none"/>
          <g font-family="Roboto, sans-serif" font-weight="700" fill="#44464e">
            <text x="1801" y="286" font-size="10" transform="rotate(5 1801 286)">FRONT</text>
            <text x="1840" y="289" font-size="7" transform="rotate(-14 1840 289)">RIGHT</text>
            <g fill="#b5b7b9" font-size="15">
              <text x="1773" y="297" transform="rotate(18 1773 297)">W</text>
              <text x="1784" y="330" transform="rotate(-18 1784 330)">S</text>
              <text x="1880" y="321" transform="rotate(12 1880 321)">E</text>
            </g>
          </g>
        </g>
        <g>
          <path d="M50 998L76 986V1000z" fill="#44484c"/>
          <path d="M50.500 952V998" stroke="#1f6cc4" stroke-width="6"/>
          <path d="M52 953V996" stroke="#6a9fd4" stroke-width="2"/>
          <path d="M49 998L92 1004.500" stroke="#b03a38" stroke-width="5"/>
          <path d="M50 998L78 1001.500" stroke="#f4d0a0" stroke-width="2"/>
          <path d="M90 991l10 10M100 991l-10 10" stroke="#c8662a"/>
          <path d="M75 974l4 4 4-4M79 978v6" stroke="#666a6e" fill="none"/>
          <path d="M48 936.500H60.500L48.500 948.500H61" stroke="#3a8fe8" fill="none" stroke-width="1.300"/>
        </g>
        <g fill="none">
          <path d="M1910.500 645v82" stroke="#1e4f8c" stroke-width="2"/>
          <path d="M1887 697l18 3M1890 703l15-2" stroke="#b8b8a0"/>
          <rect x="1906" y="695" width="5" height="10" stroke="#e8e8e8"/>
        </g>
      </svg>
      <span class="caption">[−][Custom View][Shaded with edges]</span>
      <div class="controls">
        <svg class="icon" width="10" height="11" viewBox="0 0 10 11"><path d="M0 8h10v3H0z" fill="#f0f0f0"/></svg>
        <svg class="icon" width="11" height="11" viewBox="0 0 11 11"><path d="M1 4h6v6H1z" fill="none" stroke="#f0f0f0" stroke-width="2"/><path d="M3 1.500h7V8" fill="none" stroke="#f0f0f0"/></svg>
        <svg class="icon" width="10" height="10" viewBox="0 0 10 10"><path d="M1 1l8 8M9 1L1 9" stroke="#f0f0f0" stroke-width="2.500"/></svg>
      </div>
      <button class="named">Unnamed ${caret(7)}</button>
      <svg class="nav" viewBox="0 0 32 212" fill="none" stroke="#3f4246" stroke-width="1.500" role="img" aria-label="Navigation bar">
        <circle cx="25" cy="5" r="3.500"/><path d="M23.500 3.500l3 3M26.500 3.500l-3 3" stroke-width="1"/>
        <path d="M16 19H26V30A10.500 10.500 0 1 1 16 19z"/><circle cx="16" cy="30" r="6"/>
        <circle cx="16" cy="30" r="8" stroke-width="1" stroke-dasharray="4 3"/>
        <path d="M13 49h6l-3 3zM13 119h6l-3 3zM13 157h6l-3 3z" fill="#3f4246" stroke="none"/>
        <path d="M3 56.500H29M3 164.500H29" stroke="#74767a" stroke-width="1"/>
        <path d="M12 84Q9 79 5 74q0-3 3-1l3 3-1-11q2-2 3 0l1.500 7V61q2-2 3 0l.500 10 2-9q2-1 3 1l-1 9 3-5q2-1 2.500 1l-4 12-2 4z"/>
        <path d="M5 91l14 14M19 91L5 105"/><path d="M4 90h5l-5 5zM20 90h-5l5 5zM4 106v-5l5 5z" fill="#3f4246" stroke="none"/>
        <circle cx="20" cy="104" r="5"/><path d="M23 108l4 4" stroke-width="3"/>
        <path d="M13.500 149V134h-3l5-6 5 6h-3v15z"/><path d="M10 145Q3 143 5 139q10-4 22 0 2 4-8 6"/><path d="M7 144l5-4v7z" fill="#3f4246"/>
        <path d="M5 169.500h5v6H5zM13 169.500h5v6h-5zM21 169.500h5v6h-5zM5 179.500H20v12H5z"/><path d="M9 181.500l7 4-7 4z" fill="#3f4246" stroke="none"/>
        <circle cx="25" cy="206" r="3.500"/><path d="M23 206h4" stroke-width="1"/>
      </svg>
      <div class="history"><span>Command:</span><span>Command:</span><span>Command:</span></div>`;
  }
}

@customElement("command-line")
class CommandLine extends LitElement {
  static styles = [shared, css`
    :host { display: flex; height: 30px; margin: 0 3px; border: 1px solid #5e6062; border-radius: 3px; background: #bcbec0; overflow: hidden; }
    .grip { display: flex; align-items: center; gap: 8px; width: 53px; padding-left: 2px; background: linear-gradient(#6a6c6e, #44474a); color: #dcdcdc; }
    .grip button { display: grid; }
    .prompt { display: flex; align-items: center; gap: 4px; padding: 0 7px 0 5px; }
    .line { flex: 1; font: italic 12px "Liberation Mono", monospace; outline: 0; padding-top: 1px; }
    .line::placeholder { color: #77696c; opacity: 1; }
    .up { padding-right: 4px; }
    .up .caret { transform: rotate(180deg); }
  `];
  render() {
    return html`
      <div class="grip">
        <svg class="icon" width="6" height="18" viewBox="0 0 6 18"><path d="M1 0v18M4.500 0v18" stroke="#aaa" stroke-width="2" stroke-dasharray="2 1"/></svg>
        <button aria-label="Close">${cross(10, 2)}</button>
        <button aria-label="Customize"><svg class="icon" width="15" height="15" viewBox="0 0 15 15"><path d="M1 2l3 3 2-1 1-2-2-2q4 0 5 3l-.5 3 5 5-2 2.500-5.500-5q-6 0-6-6.500z" fill="#ddd"/></svg></button>
      </div>
      <button class="prompt" aria-label="Recent commands">
        <svg class="icon" width="15" height="14" viewBox="0 0 15 14"><rect x=".5" y=".5" width="14" height="13" rx="1" fill="#c8cacc" stroke="#77797b"/><path d="M3 4l3 3-3 3M7 10.500h4" fill="none" stroke="#333" stroke-width="1.300"/></svg>${caret(6)}
      </button>
      <input class="line" aria-label="Command" placeholder="Type a command">
      <button class="up" aria-label="History">${caret(8)}</button>`;
  }
}

@customElement("status-bar")
class StatusBar extends LitElement {
  static styles = [shared, css`
    :host { display: flex; justify-content: space-between; height: 30px; background: #b1b1b1; border-bottom: 2px solid #e6e6e6; color: #111; }
    .sheets { display: flex; height: 18px; padding-left: 10px; }
    .sheet { width: 65px; background: linear-gradient(#e2e2e2, #d6d6d6); border-radius: 0 0 10px 10px; color: #6a6e70; border-right: 1px solid #eee; line-height: 17px; }
    .sheet.on { background: #fafafa; color: #111; font-weight: 700; width: 60px; }
    .add { width: 22px; height: 16px; margin-left: 3px; background: #e6e6e6; border-radius: 8px 0 10px 3px; display: grid; place-items: center; }
    .toggles {
      display: grid; background: #e6e6e6; padding: 0 2px 1px 0; align-items: center; justify-items: center; border-top: 1px solid #efefef;
      grid-template-columns: 52px 24px 24px 15px 29px 25px 21px 18px 21px 16px 25px 24px 15px 26px 23px 17px 26px 24px 17px 26px 23px 24px 33px 28px 13px 28px 24px 56px 19px 26px 30px 27px 22px 28px 23px;
    }
    .toggles .caret { color: #111; }
    .toggles button { display: flex; align-items: center; gap: 4px; }
  `];
  render() {
    const items = ["=MODEL", "grid", "snap", "v", "dyn", "ortho", "polar", "v", "iso", "v", "otrack", "osnap", "v",
      "lweight", "osnap3", "v", "ducs", "gizmo", "v", "annA", "annB", "annC", "=1:1", "gear", "v", "plus", "ruler",
      "=Decimal", "v", "shapes", "hw", "perf", "trust", "full", "menu"];
    return html`
      <div class="sheets">
        <button class="sheet on">Model</button><button class="sheet">Layout1</button><button class="sheet">Layout2</button>
        <button class="add" aria-label="New layout"><svg class="icon" width="8" height="8" viewBox="0 0 8 8"><path d="M4 0v8M0 4h8" stroke="#444" stroke-width="2"/></svg></button>
      </div>
      <div class="toggles">
        ${items.map((x) => x === "v" ? html`<button aria-label="Options">${caret(6)}</button>`
          : x[0] === "=" ? html`<button>${x.slice(1)}${x === "=1:1" ? caret(6) : nothing}</button>`
          : html`<button aria-label=${x}>${icon(x)}</button>`)}
      </div>`;
  }
}

@customElement("toast-card")
class ToastCard extends LitElement {
  static styles = [shared, css`
    :host { display: block; width: 364px; height: 131px; background: #cdd0d5; padding: 19px 22px 0 16px; color: #111; }
    .head { display: flex; align-items: center; gap: 7px; height: 16px; line-height: 16px; }
    .head button { margin-left: auto; color: #555; display: grid; }
    .content { display: flex; gap: 16px; padding-top: 15px; line-height: 20px; font-size: 14px; }
    .content svg { margin-top: 12px; }
    .content b { font-weight: 600; display: block; }
    .content p { margin: 0; color: #55575b; }
  `];
  @property() heading = "Screenshot saved";
  render() {
    return html`
      <div class="head">
        <svg class="icon" width="16" height="16" viewBox="0 0 16 16"><path d="M0 0h16v16H0z" fill="#3c3d40"/><path d="M4 3h6v10H4z" fill="#f6d68a"/><path d="M7 13h7q1-3-2-3-2-3-4 0-2 1-1 3z" fill="#2f8ae8"/></svg>
        <span>OneDrive</span><button aria-label="Dismiss">${cross(11, 1)}</button>
      </div>
      <div class="content">
        <svg class="icon" width="60" height="39" viewBox="0 0 60 39">
          <path d="M14 10A18 18 0 0 1 48 14L36 20L14 14z" fill="#e4e5e7"/>
          <path d="M0 24A14.500 14.500 0 0 1 20 10L36 20L4 33A14 14 0 0 1 0 24z" fill="#efeff0"/>
          <path d="M36 20Q48 10 57 20Q62 28 58 33z" fill="#f1f2f3"/>
          <path d="M4 33L38 18L58 33Q54 39 47 39H14Q7 39 4 33z" fill="#fff"/>
        </svg>
        <div><b>${this.heading}</b><p>The screenshot was added to your OneDrive.</p></div>
      </div>`;
  }
}

@customElement("app-root")
class AppRoot extends LitElement {
  static styles = [shared, css`
    :host { display: flex; flex-direction: column; min-height: 100vh; position: relative; background: #000; overflow: hidden; }
    model-view { flex: 1; min-height: 400px; }
    .menu {
      position: absolute; left: 0; top: 0; width: 41px; height: 41px; border: 1px solid #111; display: flex; align-items: center; gap: 2px; padding-left: 3px;
      background: linear-gradient(#b4b4b4, #777);
    }
    toast-card { position: absolute; right: 16px; bottom: 52px; }
    .mark { position: absolute; left: 50%; bottom: 24px; transform: translateX(-50%); text-align: center; pointer-events: none; }
    .mark strong { display: block; font: 700 66px/68px "DejaVu Sans", sans-serif; color: #696c70; }
    .mark span { display: block; font: 700 33px/36px "Open Sans", sans-serif; color: rgba(255, 255, 255, .08); }
  `];
  render() {
    return html`
      <title-bar></title-bar>
      <ribbon-bar></ribbon-bar>
      <file-tabs></file-tabs>
      <model-view></model-view>
      <command-line></command-line>
      <status-bar></status-bar>
      <button class="menu" aria-label="Application menu">
        <svg class="icon" width="24" height="26" viewBox="0 0 24 26"><path d="M11.500 0L0 24q3 2 6 0l1-4q5 3 9 0l1 4q3 2 7 0L13 0z" fill="#b83a22"/><path d="M11.500 0L13 0 17 10l-5 7-6-3zM8 18l-3 5" fill="#8c2412" fill-opacity=".35"/><path d="M7 20q5-6 9 0" fill="#8a8a8a"/></svg>${caret(7)}
      </button>
      <div class="mark"><strong lang="ar">مستقل</strong><span>mostaqil.com</span></div>
      <toast-card></toast-card>`;
  }
}
